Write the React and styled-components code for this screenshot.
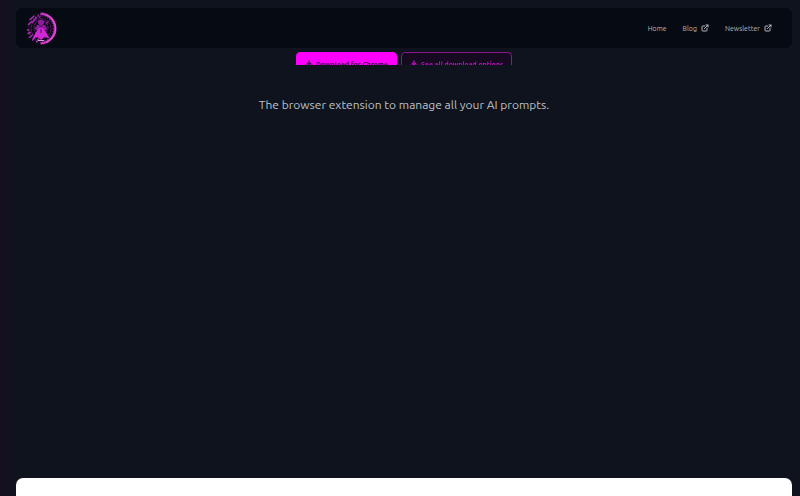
import React from "react";
import styled, { createGlobalStyle } from "styled-components";
import { Download, ExternalLink } from "lucide-react";

const GlobalStyle = createGlobalStyle`
  * {
    box-sizing: border-box;
  }

  body {
    margin: 0;
    background-color: #0e131d;
    font-family: Ubuntu, "Noto Sans", sans-serif;
  }
`;

const links = [
  { label: "Home", href: "#home" },
  { label: "Blog", href: "#blog", external: true },
  { label: "Newsletter", href: "#newsletter", external: true },
];

const Logo = () => (
  <LogoMark viewBox="0 0 66 66" role="img" aria-label="Home">
    <g fill="none" stroke="#7d1c88">
      <circle cx="30" cy="33" r="25" strokeWidth="3" strokeDasharray="2 3" />
      <circle cx="30" cy="33" r="20" strokeWidth="2" opacity="0.6" />
      <circle cx="30" cy="31" r="14" strokeWidth="3" strokeDasharray="2 2" />
    </g>
    <g stroke="#a92bb2" strokeWidth="3" strokeLinecap="round">
      <path d="M8 15l8-7M12 21l9-10M5 25l5-5M3 36h3M4 43l5-2M7 51l6-5M13 56l5-5M21 60l4-6" />
      <path d="M24 5l4 7M45 18l-5 6" strokeWidth="2" />
    </g>
    <path fill="#c935c6" d="M29 1a32 32 0 0 1 0 64v-5a27 27 0 0 0 0-54z" />
    <path
      fill="none"
      stroke="#e05ad4"
      strokeWidth="2"
      d="M40 5a30 30 0 0 1 0 56"
    />
    <circle cx="30" cy="21" r="6" fill="#8d1d98" />
    <path fill="#8d1d98" d="M22 26h16l5 8-5 3H22l-5-3z" />
    <path fill="#cf27d4" d="M26 32h8l6 8 7 13-10-3-7 6-7-6-10 3 7-13z" />
    <path
      fill="none"
      stroke="#4b0c58"
      strokeWidth="2"
      d="M25 25l5 4 5-4M30 34v8"
    />
    <path stroke="#d3a0d2" strokeWidth="2" d="M24 57h12" />
  </LogoMark>
);

const App = () => {
  return (
    <Page>
      <GlobalStyle />
      <Header>
        <LogoLink href="#home">
          <Logo />
        </LogoLink>
        <Nav>
          {links.map(({ label, href, external }) => (
            <NavItem key={label} href={href}>
              {label}
              {external && <ExternalLink size={8} strokeWidth={3} />}
            </NavItem>
          ))}
        </Nav>
      </Header>

      <Hero>
        <Actions>
          <Button $primary>
            <Download size={8} strokeWidth={4} />
            Download for Chrome
          </Button>
          <Button>
            <Download size={8} strokeWidth={4} />
            See all download options
          </Button>
        </Actions>
        <Tagline>The browser extension to manage all your AI prompts.</Tagline>
      </Hero>

      <Panel />
    </Page>
  );
};

const Page = styled.div`
  display: flex;
  flex-direction: column;
  min-height: 100vh;
  padding: 8px 8px 0 16px;
  background: linear-gradient(to right, #16101f 0, #12111f 10px, #0e131d 18px);
`;

const Header = styled.header`
  display: flex;
  align-items: center;
  justify-content: space-between;
  height: 40px;
  padding: 0 20px 0 10px;
  border-radius: 6px;
  background-color: #060a12;
`;

const LogoLink = styled.a`
  display: flex;
`;

const LogoMark = styled.svg`
  width: 33px;
  height: 33px;
`;

const Nav = styled.nav`
  display: flex;
  align-items: center;
  gap: 16px;
`;

const NavItem = styled.a`
  display: flex;
  align-items: center;
  gap: 4px;
  color: #b4b7bd;
  font-size: 7px;
  line-height: 12px;
  text-decoration: none;
`;

const Hero = styled.main`
  display: flex;
  flex: 1;
  flex-direction: column;
  align-items: center;
  padding-top: 4px;
`;

const Actions = styled.div`
  display: flex;
  gap: 4px;
  height: 13px;
  overflow: hidden;
  will-change: transform;
`;

const Button = styled.button`
  display: flex;
  flex-shrink: 0;
  align-items: center;
  gap: 3px;
  height: 23px;
  padding: 0 8px;
  border: 1px solid ${({ $primary }) => ($primary ? "#ff00ff" : "#8a168f")};
  border-radius: 4px;
  background-color: ${({ $primary }) => ($primary ? "#ff00ff" : "#150a20")};
  color: ${({ $primary }) => ($primary ? "#3c0648" : "#c010c4")};
  font-family: inherit;
  font-size: 7px;
  font-weight: 700;
  cursor: pointer;
`;

const Tagline = styled.p`
  margin: 30px 0 0;
  color: #bfc2c7;
  font-size: 12px;
  line-height: 20px;
  text-align: center;
`;

const Panel = styled.section`
  min-height: 18px;
  border-radius: 7px 7px 0 0;
  background-color: #ffffff;
`;

export default App;
